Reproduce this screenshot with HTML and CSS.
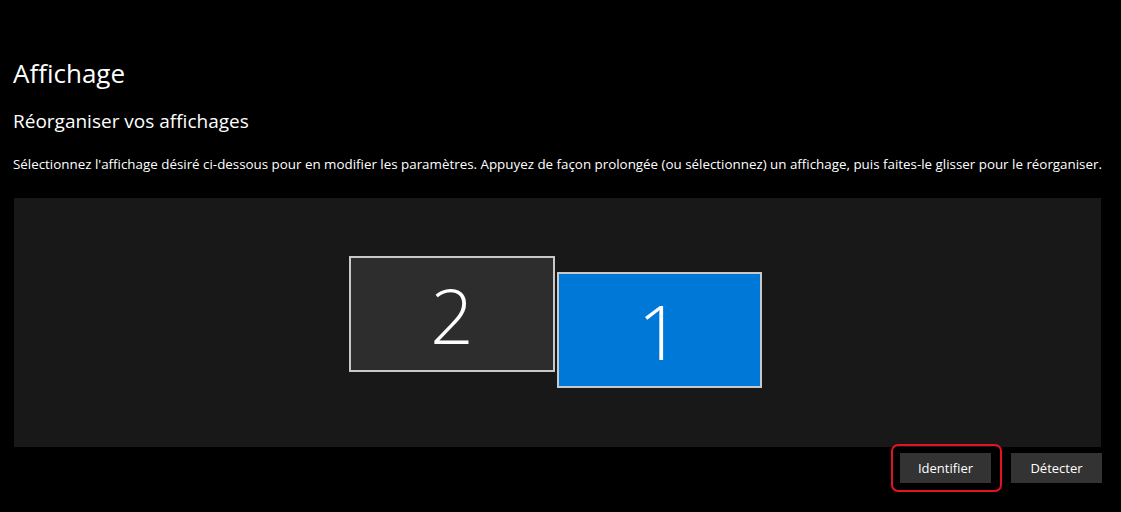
FILE: index.html
```html
<!DOCTYPE html>
<html lang="fr">
<head>
    <meta charset="UTF-8">
    <title>Affichage</title>
    <link rel="stylesheet" href="styles.css">
</head>
<body>
<div class="page">
    <h1 class="title">Affichage</h1>
    <h2 class="subtitle">Réorganiser vos affichages</h2>
    <p class="hint">Sélectionnez l'affichage désiré ci-dessous pour en modifier les paramètres. Appuyez de façon prolongée (ou sélectionnez) un affichage, puis faites-le glisser pour le réorganiser.</p>

    <div class="layout">
        <div class="monitor monitor-2">2</div>
        <div class="monitor monitor-1 selected">1</div>
    </div>

    <div class="actions">
        <span class="focus-ring"><button class="btn">Identifier</button></span>
        <button class="btn">Détecter</button>
    </div>
</div>
</body>
</html>
```

FILE: styles.css
```css
html, body {
    margin: 0;
    padding: 0;
    background: #000;
}

body {
    font-family: "Open Sans", "Noto Sans", sans-serif;
    color: #fff;
}

.page {
    padding: 56px 20px 0 13px;
}

.title {
    margin: 0;
    font-size: 26px;
    font-weight: 400;
    line-height: 34px;
}

.subtitle {
    margin: 18px 0 0 0;
    font-size: 19px;
    font-weight: 400;
    line-height: 26px;
}

.hint {
    margin: 21px 0 0 0;
    font-size: 13.36px;
    line-height: 18px;
    white-space: nowrap;
}

/* display arrangement area */
.layout {
    position: relative;
    margin: 25px 0 0 1px;
    width: 1087px;
    height: 249px;
    background: #181818;
}

.monitor {
    position: absolute;
    box-sizing: border-box;
    border: 2px solid #c8c8c8;
    display: flex;
    align-items: center;
    justify-content: center;
    font-size: 76px;
    font-weight: 300;
    color: #fff;
}

.monitor-2 {
    left: 335px;
    top: 58px;
    width: 206px;
    height: 116px;
    background: #2d2d2d;
}

.monitor-1 {
    left: 543px;
    top: 74px;
    width: 205px;
    height: 116px;
    background: #0078d7;
}

.actions {
    display: flex;
    justify-content: flex-end;
    align-items: center;
    gap: 20px;
    width: 1089px;
    margin-top: -3px;
}

/* keyboard focus ring, drawn over the edge of the layout area */
.focus-ring {
    position: relative;
    z-index: 1;
    display: inline-flex;
    padding: 7px 9px 7px 7px;
    border: 2px solid #e81123;
    border-radius: 7px;
    margin-left: -9px;
    margin-right: -11px;
}

.btn {
    font-family: "Open Sans", "Noto Sans", sans-serif;
    font-size: 13px;
    color: #fff;
    background: #333;
    border: none;
    width: 91px;
    height: 30px;
    padding: 0;
}
```
